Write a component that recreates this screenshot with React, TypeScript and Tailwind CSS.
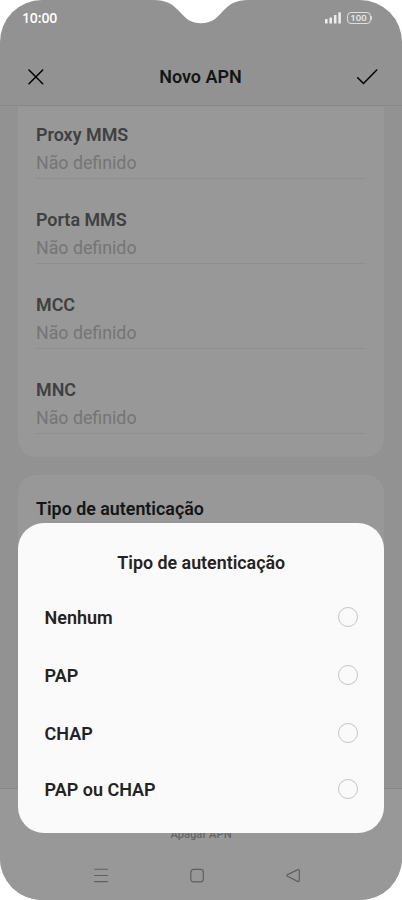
import React from "react";

interface FieldProps {
  label: string;
  value: string;
}

const fields: FieldProps[] = [
  { label: "Proxy MMS", value: "Não definido" },
  { label: "Porta MMS", value: "Não definido" },
  { label: "MCC", value: "Não definido" },
  { label: "MNC", value: "Não definido" },
];

const options = ["Nenhum", "PAP", "CHAP", "PAP ou CHAP"];

const StatusBar: React.FC = () => (
  <div className="relative flex h-12 shrink-0 justify-between pl-[22px] pr-[30px] text-white">
    <span className="pt-[8px] font-['Open_Sans',sans-serif] text-[14px] font-semibold leading-5 tracking-[-0.15px]">10:00</span>
    {/* camera notch */}
    <svg className="absolute left-[154px] top-0" width="94" height="24" viewBox="0 0 94 24" fill="#fff">
      <path d="M0 0C12 .3 18 3.500 25 11C32 18.500 36 23.200 47 23.200C58 23.200 62 18.500 69 11C76 3.500 82 .3 94 0Z" />
    </svg>
    <div className="flex pt-3">
      <svg width="17" height="12" viewBox="0 0 17 12" fill="#ececec">
        <rect x="0" y="7" width="2.600" height="4.500" rx="0.500" />
        <rect x="4.400" y="5.500" width="2.600" height="6" rx="0.500" />
        <rect x="8.900" y="3" width="2.600" height="8.500" rx="0.500" />
        <rect x="13.300" y="0.300" width="2.600" height="11.200" rx="0.500" />
      </svg>
      <div className="ml-[5px] flex h-3 w-6 items-center justify-center rounded-[4px] border border-[#dedede] font-['Open_Sans',sans-serif] text-[9.500px] font-semibold leading-none text-[#ececec]">
        100
      </div>
      <div className="mt-1 h-[4px] w-[1.500px] rounded-r bg-[#dedede]" />
    </div>
  </div>
);

const Header: React.FC = () => (
  <header className="flex h-[58px] shrink-0 items-center justify-between border-b border-[#888888] pl-[28px] pr-[24px] text-black">
    <svg width="16" height="16" viewBox="0 0 16 16" fill="none" stroke="currentColor" strokeWidth="1.500" strokeLinecap="round">
      <path d="M1 1L14.700 14.700M14.700 1L1 14.700" />
    </svg>
    <h1 className="pl-px text-[18px] font-semibold leading-6 text-[#151515]">Novo APN</h1>
    <svg width="22" height="16" viewBox="0 0 22 16" fill="none" stroke="currentColor" strokeWidth="1.500" strokeLinecap="round">
      <path d="M1.700 8.800L7.500 14.500L20.700 1" />
    </svg>
  </header>
);

const Field: React.FC<FieldProps> = ({ label, value }) => (
  <div className="h-[85px] border-b border-[#8f8f8f] pt-[29px]">
    <p className="text-[17.900px] font-semibold leading-6 text-[#404040]">{label}</p>
    <p className="mt-1 text-[17.800px] leading-6 text-[#757575]">{value}</p>
  </div>
);

const NavigationBar: React.FC = () => (
  <nav className="flex h-[50px] items-center justify-between pl-[93px] pr-[101px] text-[#5f5f5f]">
    <svg width="16" height="16" viewBox="0 0 16 16" fill="none" stroke="currentColor" strokeWidth="1.100">
      <path d="M1.200 2.200H14.800M1.200 8.500H14.800M1.200 14.600H14.800" />
    </svg>
    <svg width="16" height="16" viewBox="0 0 16 16" fill="none" stroke="currentColor" strokeWidth="1.200">
      <rect x="1.800" y="2.300" width="12.500" height="12.500" rx="2.800" />
    </svg>
    <svg width="16" height="16" viewBox="0 0 16 16" fill="none" stroke="currentColor" strokeWidth="1.200" strokeLinejoin="round">
      <path d="M13 2.600L2.500 7.600Q1.300 8.400 2.500 9.200L13 14.600Q14.300 14.900 14.300 13.600V3.500Q14.300 2.200 13 2.600Z" />
    </svg>
  </nav>
);

const AuthenticationDialog: React.FC = () => (
  <section
    role="dialog"
    aria-label="Tipo de autenticação"
    className="absolute left-[18px] top-[523px] h-[310px] w-[366px] rounded-[26px] bg-[#fafafa] pl-[26.500px] pr-[26px] pt-[28px] text-[#232323]"
  >
    <h2 className="text-center text-[17.850px] font-semibold leading-6">Tipo de autenticação</h2>
    <div className="mt-[13px]">
      {options.map((option) => (
        <div key={option} className="flex h-[58px] items-center justify-between last:h-[54px]">
          <span className="pt-px text-[18px] font-semibold leading-[25px]">{option}</span>
          <span className="h-5 w-5 rounded-full border border-[#c4c4c4]" />
        </div>
      ))}
    </div>
  </section>
);

const App: React.FC = () => {
  return (
    <div className="h-[900px] w-[402px] bg-white">
      <main className="relative flex h-full flex-col overflow-hidden rounded-[42px] bg-[#929292] font-['Roboto',sans-serif]">
        <StatusBar />
        <Header />
        <div className="min-h-0 flex-1 overflow-hidden px-[18px]">
          <div className="-mt-3 rounded-b-[18px] bg-[#989898] px-[18px] pb-[23px]">
            {fields.map((field) => (
              <Field key={field.label} {...field} />
            ))}
          </div>
          <div className="mt-[17.500px] h-[400px] rounded-t-[18px] bg-[#989898] px-[18px] pt-[22px]">
            <p className="text-[17.850px] font-semibold leading-6 text-[#151515]">Tipo de autenticação</p>
          </div>
        </div>
        <footer className="flex h-[112px] shrink-0 flex-col justify-between border-t border-[#888888] bg-[#989898]">
          <p className="pt-[38px] text-center text-[11.200px] font-medium leading-4 text-[#666666]">Apagar APN</p>
          <NavigationBar />
        </footer>
        <AuthenticationDialog />
      </main>
    </div>
  );
};

export default App;
